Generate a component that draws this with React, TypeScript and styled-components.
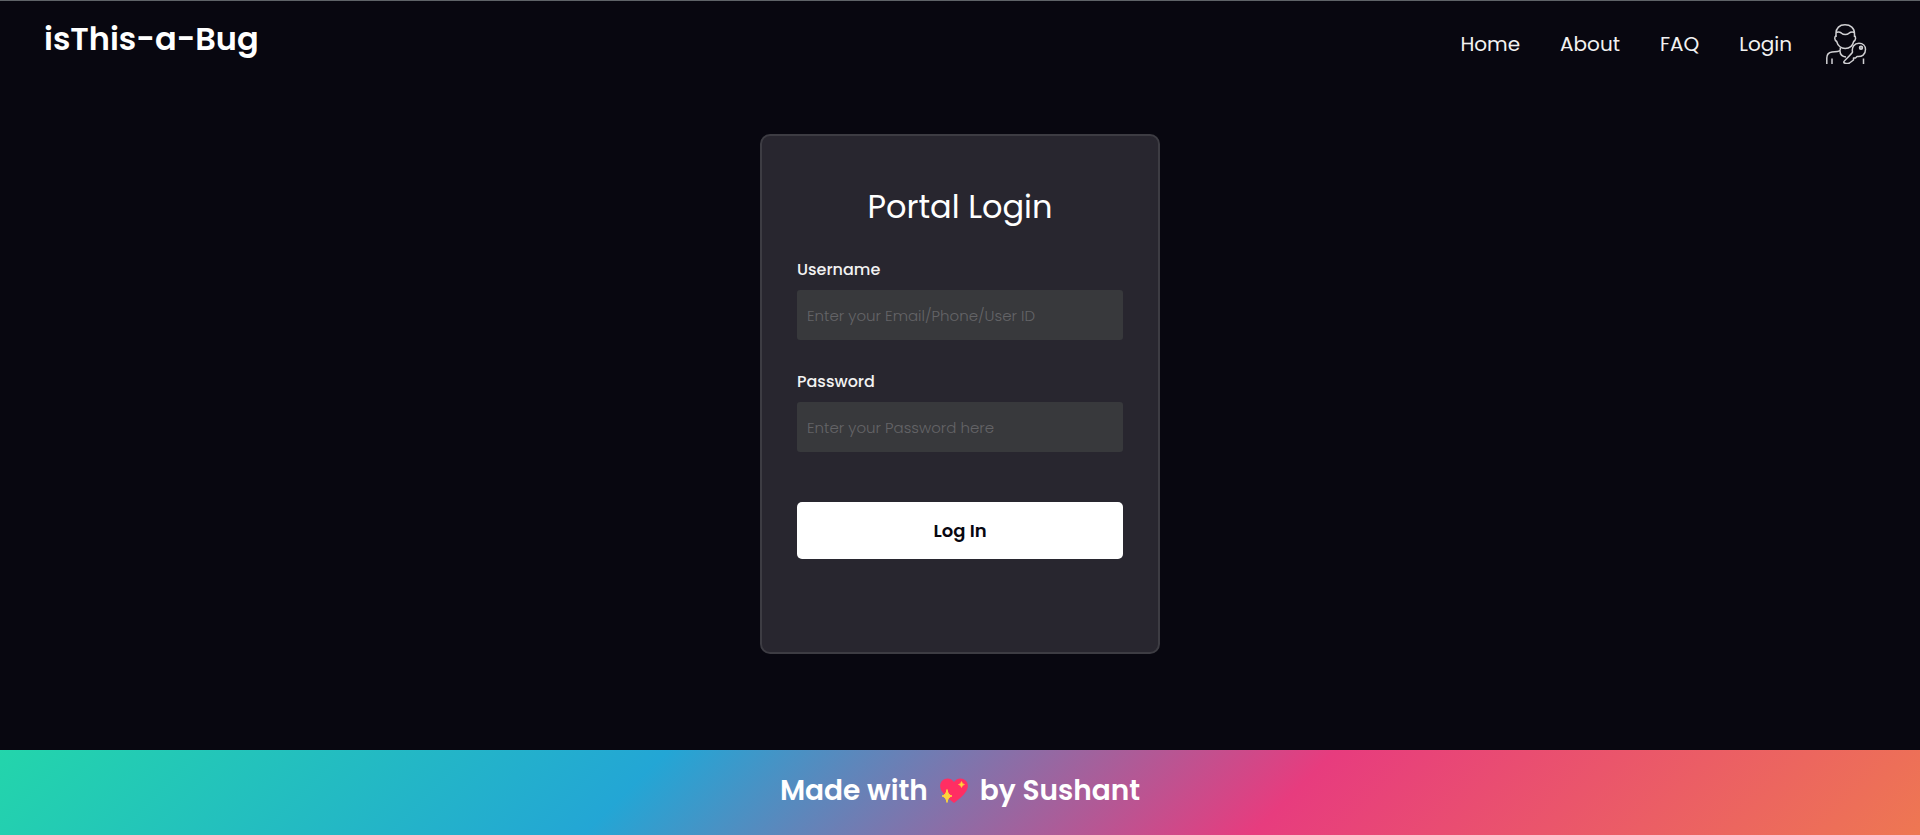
import React from 'react';
import styled, { createGlobalStyle } from 'styled-components';

const GlobalStyle = createGlobalStyle`
  *, *::before, *::after { box-sizing: border-box; margin: 0; padding: 0; }
  body {
    background: #080710;
    color: #ffffff;
    font-family: Poppins, Inter, "Liberation Sans", sans-serif;
  }
`;

const Page = styled.div`
  min-height: 100vh;
  display: flex;
  flex-direction: column;
`;

const Header = styled.header`
  display: flex;
  justify-content: space-between;
  align-items: flex-start;
  padding: 13px 52px 16px 44px;
  border-top: 1px solid #5f6368;
`;

const Brand = styled.a`
  color: #ffffff;
  font-size: 32px;
  font-weight: 600;
  line-height: 50px;
  text-decoration: none;
`;

const Nav = styled.nav`
  display: flex;
  align-items: center;
  gap: 40px;
  height: 60px;
`;

const NavLink = styled.a`
  color: #f2f2f2;
  font-size: 20px;
  line-height: 30px;
  text-decoration: none;
`;

const AccountIcon = styled.svg`
  display: block;
  width: 42px;
  height: 40px;
  margin-left: -6px;
`;

const Main = styled.main`
  flex: 1;
  display: flex;
  justify-content: center;
  align-items: flex-start;
  padding: 44px 16px 96px;
`;

const Card = styled.form`
  width: 100%;
  max-width: 400px;
  padding: 47px 35px 93px;
  border: 2px solid #3d3c43;
  border-radius: 10px;
  background: #28262f;
`;

const Title = styled.h1`
  margin-bottom: 27px;
  font-size: 32px;
  font-weight: 400;
  line-height: 48px;
  text-align: center;
`;

const Field = styled.div`
  display: flex;
  flex-direction: column;
  gap: 8px;
  margin-bottom: 30px;
`;

const Label = styled.label`
  color: #f2f2f2;
  font-size: 16px;
  font-weight: 500;
  line-height: 24px;
`;

const TextInput = styled.input`
  width: 100%;
  height: 50px;
  padding: 0 10px;
  border: 0;
  border-radius: 3px;
  background: #38393c;
  color: #ffffff;
  font: 300 15px Poppins, Inter, "Liberation Sans", sans-serif;
  &::placeholder { color: #646467; opacity: 1; }
`;

const SubmitButton = styled.button`
  display: block;
  width: 100%;
  margin-top: 50px;
  padding: 15px 0;
  border: 0;
  border-radius: 5px;
  background: #ffffff;
  color: #080710;
  font: 600 18px/27px Poppins, Inter, "Liberation Sans", sans-serif;
  cursor: pointer;
`;

const Footer = styled.footer`
  display: flex;
  justify-content: center;
  align-items: center;
  gap: 12px;
  height: 85px;
  padding-bottom: 4px;
  background: linear-gradient(-45deg, #ee7752, #e73c7e, #23a6d5, #23d5ab);
  font-size: 28px;
  font-weight: 600;
  line-height: 42px;
`;

const Heart = styled.svg`
  display: block;
  width: 28px;
  height: 26px;
`;

const links = ['Home', 'About', 'FAQ', 'Login'];

export default function App() {
  return (
    <Page>
      <GlobalStyle />
      <Header>
        <Brand href="#home">isThis-a-Bug</Brand>
        <Nav>
          {links.map((name) => (
            <NavLink key={name} href={`#${name.toLowerCase()}`}>{name}</NavLink>
          ))}
          <AccountIcon viewBox="0 0 42 40" fill="none" stroke="#d0d0d3" strokeWidth="1.500" strokeLinejoin="round" aria-hidden="true">
            <path d="M10 13V9.500C10 4 13.500 .8 19 .8S28.500 4 28.500 9.500V13" />
            <path d="M10 8.500C12.500 7.500 14 8 15.500 9.200C17.500 11 21 11 23 9.200C24.500 8 26 7.500 28.500 8.500" />
            <path d="M10.200 11.500C8.200 13 8.200 16 10.700 17.500C11.700 21.500 15 24.500 19.200 24.500C23.500 24.500 26.700 21.500 27.700 17.500C30 16 30.200 13 28.300 11.500" />
            <path d="M14.300 23.500V25.500C14.300 27 13.500 27.200 11.500 27.400L6 28C2.500 28.500 .8 31 .8 34V40" />
            <path d="M14 27C14 30 16 32.500 20 33" />
            <path d="M6 34.500V40M37.500 34.500V40" />
            <path d="M26.500 28C25.500 23 28.500 19.200 33 19.200C37 19.200 39.500 22 39.500 25.500C39.500 30.500 36 33 31 32.500L29.500 34H27.500V36L23.500 39C21.500 40 18 39.700 17.700 38C17.700 37 26 30 26.500 28Z" />
            <circle cx="35" cy="23.800" r="1.500" fill="#929298" />
          </AccountIcon>
        </Nav>
      </Header>
      <Main>
        <Card onSubmit={(event) => event.preventDefault()}>
          <Title>Portal Login</Title>
          <Field>
            <Label htmlFor="username">Username</Label>
            <TextInput id="username" type="text" placeholder="Enter your Email/Phone/User ID" />
          </Field>
          <Field>
            <Label htmlFor="password">Password</Label>
            <TextInput id="password" type="password" placeholder="Enter your Password here" />
          </Field>
          <SubmitButton type="submit">Log In</SubmitButton>
        </Card>
      </Main>
      <Footer>
        <span>Made with</span>
        <Heart viewBox="0 0 28 26" role="img" aria-label="love">
          <path fill="#ff2e63" d="M14 4C11 -.6 5.500 -.4 2.400 2.400C-.6 5.200-.4 9.800 1.800 13.200C4.500 17.500 9.500 21.500 14 25C18.500 21.500 23.500 17.500 26.200 13.200C28.400 9.800 28.600 5.200 25.600 2.400C22.500 -.4 17 -.6 14 4Z" />
          <path fill="#ffd43b" d="M7 11.500Q7.800 17 12 18Q7.800 19 7 24.500Q6.200 19 2 18Q6.200 17 7 11.500Z" stroke="#ffd43b" strokeWidth="1" />
          <path fill="#ffd43b" d="M21.500 3.500Q22 6 24.500 6.500Q22 7 21.500 9.500Q21 7 18.500 6.500Q21 6 21.500 3.500Z" stroke="#ffd43b" strokeWidth=".6" />
        </Heart>
        <span>by Sushant</span>
      </Footer>
    </Page>
  );
}
